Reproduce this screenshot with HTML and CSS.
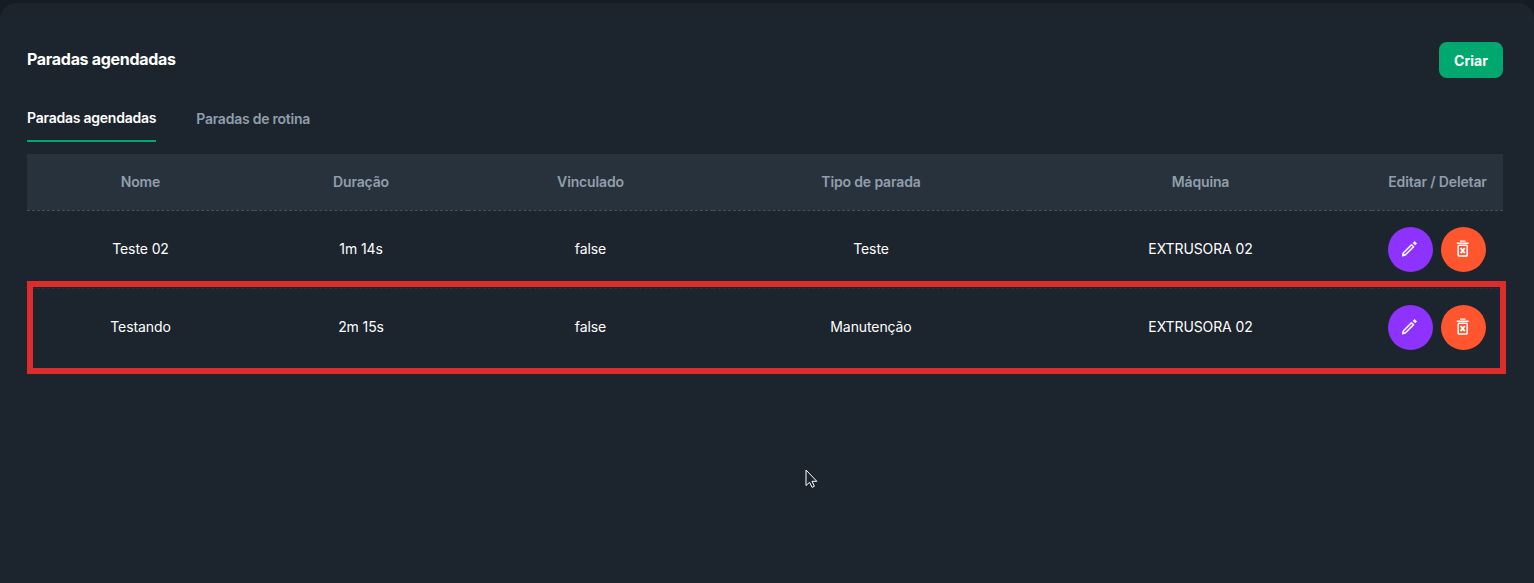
FILE: index.html
```html
<!DOCTYPE html>
<html lang="en">
<head>
    <meta charset="UTF-8">
    <meta name="viewport" content="width=device-width, initial-scale=1.0">
    <title>Paradas agendadas</title>
    <link rel="stylesheet" href="styles.css">
</head>
<body>

    <svg class="icon-defs" width="0" height="0">
        <symbol id="icon-edit" viewBox="0 0 20 20">
            <path fill="none" stroke="currentColor" stroke-width="1.6" stroke-linejoin="round" d="M2.8 16.4l.7-2.6 8-8 2 2-8 8z"/>
            <path fill="currentColor" d="M2 17.4l.7-3.4 2.7 2.7zM12.7 3.9L14.6 2 17 4.4l-1.9 1.9z"/>
        </symbol>
        <symbol id="icon-delete" viewBox="0 0 20 20">
            <path fill="currentColor" d="M7 1.5h5.5v1.3H7zM3.8 3.6h11.8v1.4H3.8z"/>
            <rect x="5.2" y="6.2" width="9" height="10.8" rx="0.8" fill="none" stroke="currentColor" stroke-width="1.5"/>
            <path fill="none" stroke="currentColor" stroke-width="1.9" d="M7.6 9l4.2 5.2M11.8 9l-4.2 5.2"/>
        </symbol>
    </svg>

    <main class="card">
        <header class="card-header">
            <h1>Paradas agendadas</h1>
            <button class="create-button" type="button">Criar</button>
        </header>

        <nav class="tabs">
            <a class="tab active">Paradas agendadas</a>
            <a class="tab">Paradas de rotina</a>
        </nav>

        <div class="table-wrap">
            <table>
                <colgroup>
                    <col class="col-name">
                    <col class="col-duration">
                    <col class="col-linked">
                    <col class="col-type">
                    <col class="col-machine">
                    <col class="col-actions">
                </colgroup>
                <thead>
                    <tr>
                        <th>Nome</th>
                        <th>Duração</th>
                        <th>Vinculado</th>
                        <th>Tipo de parada</th>
                        <th>Máquina</th>
                        <th>Editar / Deletar</th>
                    </tr>
                </thead>
                <tbody>
                    <tr>
                        <td>Teste 02</td>
                        <td>1m 14s</td>
                        <td>false</td>
                        <td>Teste</td>
                        <td>EXTRUSORA 02</td>
                        <td class="actions-cell">
                            <div class="actions">
                                <button class="round-button edit" type="button" aria-label="Editar">
                                    <svg width="20" height="20"><use href="#icon-edit"/></svg>
                                </button>
                                <button class="round-button delete" type="button" aria-label="Deletar">
                                    <svg width="20" height="20"><use href="#icon-delete"/></svg>
                                </button>
                            </div>
                        </td>
                    </tr>
                    <tr>
                        <td>Testando</td>
                        <td>2m 15s</td>
                        <td>false</td>
                        <td>Manutenção</td>
                        <td>EXTRUSORA 02</td>
                        <td class="actions-cell">
                            <div class="actions">
                                <button class="round-button edit" type="button" aria-label="Editar">
                                    <svg width="20" height="20"><use href="#icon-edit"/></svg>
                                </button>
                                <button class="round-button delete" type="button" aria-label="Deletar">
                                    <svg width="20" height="20"><use href="#icon-delete"/></svg>
                                </button>
                            </div>
                        </td>
                    </tr>
                </tbody>
            </table>
            <!-- Red highlight drawn over the second row -->
            <div class="highlight"></div>
        </div>
    </main>

    <svg class="cursor" viewBox="0 0 14 20" width="14" height="20">
        <path fill="#1c252e" stroke="#fff" stroke-width="1" d="M1 1v15.5l3.6-3.2 2.4 5 2.4-1-2.4-5h4.8L1 1z"/>
    </svg>

</body>
</html>
```

FILE: styles.css
```css
/* Basic Styles */
* {
    box-sizing: border-box;
}

html,
body {
    height: 100%;
}

body {
    margin: 0;
    padding-top: 3px;
    background-color: #161c24;
    font-family: Inter, "Liberation Sans", sans-serif;
    color: #fff;
    overflow: hidden;
}

.icon-defs {
    position: absolute;
}

.card {
    height: 100%;
    padding: 39px 31px 0 27px;
    background-color: #1c252e;
    border-radius: 16px 16px 0 0;
}

.card-header {
    display: flex;
    justify-content: space-between;
    align-items: center;
    height: 36px;
    margin-bottom: 16px;
}

.card-header h1 {
    margin: 0 0 2px;
    font-size: 16px;
    font-weight: 700;
    letter-spacing: -0.3px;
}

.create-button {
    width: 64px;
    height: 36px;
    padding: 0;
    border: none;
    border-radius: 8px;
    background-color: #00a76f;
    color: #fff;
    font-family: inherit;
    font-size: 14px;
    font-weight: 700;
}

.tabs {
    display: flex;
    gap: 40px;
    height: 48px;
    margin-bottom: 12px;
}

.tab {
    display: flex;
    align-items: center;
    height: 48px;
    font-size: 14px;
    font-weight: 600;
    letter-spacing: -0.24px;
    color: #919eab;
}

.tab.active {
    color: #fff;
    border-bottom: 2px solid #00a76f;
}

.table-wrap {
    position: relative;
}

table {
    width: 100%;
    table-layout: fixed;
    border-collapse: collapse;
}

.col-name { width: 227px; }
.col-duration { width: 214px; }
.col-linked { width: 245px; }
.col-type { width: 316px; }
.col-machine { width: 343px; }
.col-actions { width: 131px; }

th {
    height: 56px;
    padding: 0;
    background-color: #28323d;
    border-bottom: 1px dashed #454f5b;
    font-size: 14px;
    font-weight: 600;
    letter-spacing: -0.15px;
    color: #919eab;
    text-align: center;
}

td {
    height: 78px;
    padding: 0 0 2px;
    border-bottom: 1px dashed #28323d;
    font-size: 14px;
    letter-spacing: -0.1px;
    text-align: center;
}

td.actions-cell {
    padding: 0 2px 0 0;
}

tbody tr:last-child td {
    border-bottom: none;
}

.actions {
    display: flex;
    justify-content: center;
    gap: 8px;
}

.round-button {
    display: flex;
    align-items: center;
    justify-content: center;
    width: 45px;
    height: 45px;
    padding: 0;
    border: none;
    border-radius: 50%;
    color: #fff;
}

.round-button.edit {
    background-color: #8e33ff;
}

.round-button.delete {
    background-color: #ff5630;
}

.highlight {
    position: absolute;
    left: 0;
    right: -3px;
    top: 127px;
    height: 93px;
    border: 6px solid #dd2c2c;
    pointer-events: none;
}

.cursor {
    position: absolute;
    left: 805px;
    top: 469px;
}
```
